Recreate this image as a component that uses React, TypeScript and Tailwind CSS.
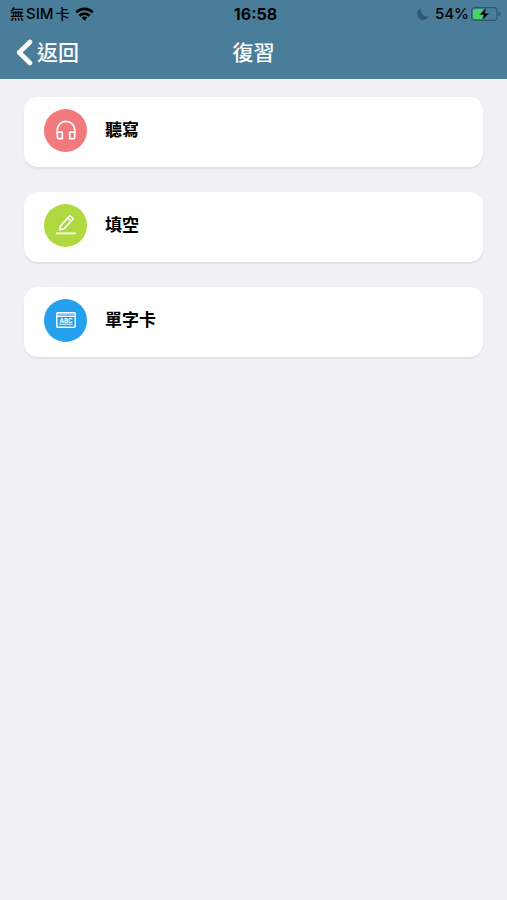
import React from 'react';

const HeadphonesIcon = () => (
  <svg className="w-5 h-5" viewBox="0 0 20 20" fill="none" stroke="currentColor" strokeWidth={1.7} strokeLinejoin="round" aria-hidden="true">
    <path d="M1.3 13V9.6a8.7 8.2 0 0117.4 0V13" />
    <path d="M1.3 12.2h5v6.4H3a1.7 1.7 0 01-1.7-1.7zM18.7 12.2h-5v6.4H17a1.7 1.7 0 001.7-1.7z" />
  </svg>
);

const PencilIcon = () => (
  <svg className="w-5 h-5" viewBox="0 0 20 20" fill="none" stroke="currentColor" strokeWidth={1.6} strokeLinecap="round" strokeLinejoin="round" aria-hidden="true">
    <path d="M3.8 14.8l.6-3.7L13.2 1.3q.7-.7 1.5 0l2 1.7q.7.7 0 1.5L7.8 14z" />
    <path d="M11.8 3.1l3.3 3" />
    <path d="M.9 18.4h18.2" strokeWidth={1.8} />
  </svg>
);

const WordCardIcon = () => (
  <svg className="w-5 h-4" viewBox="0 0 20 16" fill="none" stroke="currentColor" aria-hidden="true">
    <rect x="0.8" y="0.8" width="18.4" height="14.4" rx="1" strokeWidth={1.4} />
    <path d="M1 4.4h18" strokeWidth={1.2} />
    <path d="M1.5 2.6h17" strokeWidth={2} strokeOpacity={0.4} />
    <text x="10" y="11.3" textAnchor="middle" fontSize="6" fontWeight="700" fill="currentColor" stroke="none">ABC</text>
    <path d="M3.4 12.2h13.2" strokeWidth={1} />
  </svg>
);

const ITEMS = [
  { label: '聽寫', color: 'bg-[#f27a7c]', Icon: HeadphonesIcon },
  { label: '填空', color: 'bg-[#afd93f]', Icon: PencilIcon },
  { label: '單字卡', color: 'bg-[#24a0ed]', Icon: WordCardIcon },
];

const StatusBar = () => (
  <div className="grid grid-cols-3 items-center h-7 pl-2.5 pr-1.5 text-black text-[15px] leading-5 font-medium">
    <div className="flex items-center gap-1.5">
      <span className="flex items-center gap-0.5 whitespace-nowrap">
        <span className="text-[14px]">無</span>
        <span>SIM</span>
        <span className="text-[14px]">卡</span>
      </span>
      <svg className="w-[19px] h-[14px]" viewBox="0 0 20 14" fill="none" stroke="currentColor" strokeWidth={2.9} aria-hidden="true">
        <path d="M1.3 5.2a12.4 12.4 0 0117.4 0" />
        <path d="M4.6 8.8a7.6 7.6 0 0110.8 0" />
        <path d="M10 14l-2.9-3a4.1 4.1 0 015.8 0z" fill="currentColor" stroke="none" />
      </svg>
    </div>
    <div className="text-center text-[16px] font-bold">16:58</div>
    <div className="flex items-center justify-end gap-0.5">
      <svg className="w-3 h-3 mr-1 text-[#315a72]" viewBox="0 0 12 12" fill="currentColor" aria-hidden="true">
        <path d="M3.6.5A6 6 0 1011.7 8.2 5.4 5.4 0 014.6 4.8 5.4 5.4 0 013.6.5z" />
      </svg>
      <span>54%</span>
      <svg className="w-[30px] h-[14px]" viewBox="0 0 30 14" aria-hidden="true">
        <rect x="0.6" y="0.6" width="25.4" height="12.8" rx="3.2" fill="none" stroke="#31576c" strokeWidth={1.1} />
        <path d="M27.6 4.4q2 .8 2 2.6t-2 2.6z" fill="#31576c" />
        <path d="M4 2h7.6v10H4a2 2 0 01-2-2V4a2 2 0 012-2z" fill="#45d665" />
        <path d="M15.4.8L8.4 7.8h4.3l-1.5 5.5 7.1-7.1h-4.4z" fill="#000" stroke="#4a7d9a" strokeWidth={0.5} />
      </svg>
    </div>
  </div>
);

const App: React.FC = () => {
  return (
    <div className="min-h-screen bg-[#f0f0f5] font-['Inter','Noto_Sans_CJK_TC',sans-serif]">
      <header className="bg-[#4a7d9a]">
        <StatusBar />
        <div className="grid grid-cols-3 items-center h-[51px] px-4 pb-0.5 text-white">
          <a href="#back" className="flex items-center gap-1 text-[21px] leading-7 font-medium">
            <svg className="w-[17px] h-[27px]" viewBox="0 0 17 27" fill="none" stroke="currentColor" strokeWidth={4.6} strokeLinecap="round" strokeLinejoin="round" aria-hidden="true">
              <path d="M14 3L3.2 13.5 14 24" />
            </svg>
            返回
          </a>
          <h1 className="text-center text-[21px] leading-7 font-medium">復習</h1>
        </div>
      </header>

      <main className="px-6 pt-[18px]">
        <nav className="flex flex-col gap-[25px]">
          {ITEMS.map(({ label, color, Icon }) => (
            <a key={label} href="#review" className="flex items-center gap-[18px] h-[70px] pl-5 pb-1 bg-white rounded-[14px] shadow-[0_2px_2px_rgba(0,0,0,0.06)]">
              <span className={`flex items-center justify-center w-[43px] h-[43px] rounded-full text-white ${color}`}>
                <Icon />
              </span>
              <span className="text-[17px] leading-6 font-bold text-black">{label}</span>
            </a>
          ))}
        </nav>
      </main>
    </div>
  );
};

export default App;
